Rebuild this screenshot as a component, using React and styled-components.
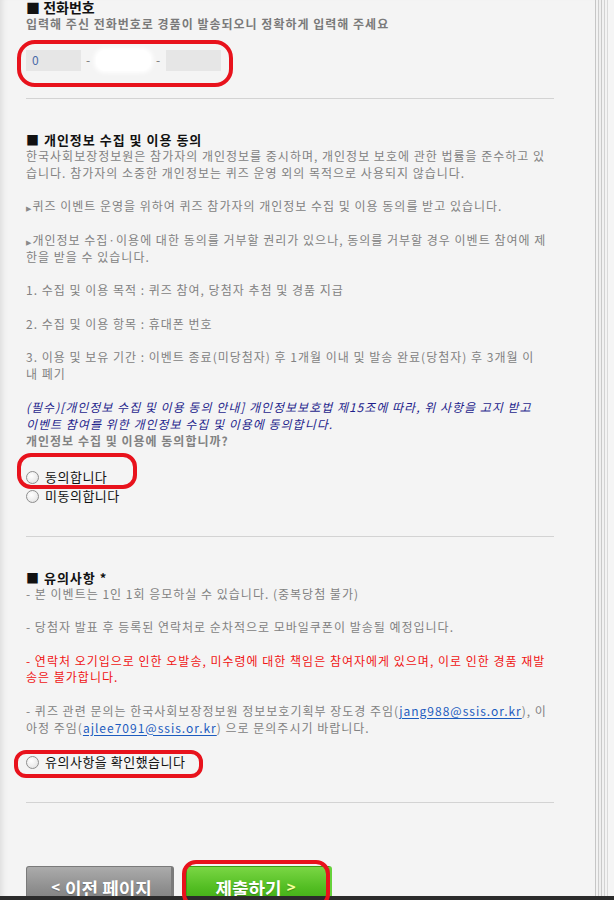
import styled, { createGlobalStyle } from "styled-components";

const GlobalStyle = createGlobalStyle`
  html, body {
    margin: 0;
    padding: 0;
    background: #f4f4f4;
  }
  body {
    font-family: "Noto Sans CJK KR", "Noto Sans", sans-serif;
  }
`;

const Frame = styled.div`
  position: relative;
  width: 614px;
  height: 900px;
  overflow: hidden;
  display: flex;
  flex-direction: column;
  background: #f4f4f4;
`;

const Viewport = styled.div`
  flex: 1;
  min-height: 0;
  display: flex;
  overflow: hidden;
`;

const Main = styled.div`
  width: 595px;
  padding-left: 26px;
  box-sizing: border-box;
  box-shadow: inset 7px 0 6px -5px rgba(0, 0, 0, 0.1);
`;

const Column = styled.div`
  width: 528px;
`;

const RightEdge = styled.div`
  width: 19px;
  background: linear-gradient(
    90deg,
    #c6c6c6 0 1px,
    #f2f2f2 1px 3px,
    #cdcdcd 3px 4px,
    #efefef 4px 6px,
    #c9c9c9 6px 7px,
    #f1f1f1 7px 9px,
    #d2d2d2 9px 10px,
    #f3f3f3 10px 12px,
    #d9d9d9 12px 13px,
    #f5f5f5 13px 19px
  );
`;

const BottomBar = styled.div`
  height: 4px;
  background: #2b2b2b;
`;

const Section = styled.section`
  padding-top: ${(p) => (p.$first ? "0" : "32px")};
  font-size: 12px;
  line-height: 16.75px;
  letter-spacing: 1px;
  color: #828282;
`;

const Title = styled.h2`
  margin: 0;
  font-size: ${(p) => (p.$large ? "14px" : "13px")};
  line-height: ${(p) => (p.$large ? "15px" : "17px")};
  letter-spacing: ${(p) => (p.$large ? "0" : "1px")};
  font-weight: 700;
  color: #111;
`;

const Sub = styled.p`
  margin: 0;
  font-size: 12px;
  line-height: 17px;
  font-weight: 700;
  color: #7a7a7a;
`;

const Para = styled.p`
  margin: ${(p) => (p.$tight ? "0" : "16.75px")} 0 0;
  color: ${(p) => (p.$tone === "red" ? "#f01414" : p.$tone === "navy" ? "#1f1f8c" : "#828282")};
  font-style: ${(p) => (p.$tone === "navy" ? "italic" : "normal")};
  font-weight: ${(p) => (p.$bold ? 700 : 400)};
  white-space: nowrap;
`;

const Arrow = styled.span`
  font-family: "DejaVu Sans", sans-serif;
  font-size: 7px;
  line-height: 0;
  letter-spacing: 0;
  color: #8a8a8a;
  margin-right: 1px;
`;

const Mail = styled.a`
  color: #1d5cbf;
  text-decoration: underline;
  text-underline-offset: 2px;
`;

const PhoneRow = styled.div`
  margin-top: 18px;
  display: flex;
  align-items: center;
`;

const PhoneBox = styled.div`
  width: 55px;
  height: 21px;
  box-sizing: border-box;
  padding-left: 6px;
  display: flex;
  align-items: center;
  font-size: 12px;
  color: #4a6aa8;
  background: ${(p) => (p.$masked ? "#ffffff" : "#e6e6e6")};
  border-radius: ${(p) => (p.$masked ? "9px" : "0")};
  box-shadow: ${(p) => (p.$masked ? "0 0 4px 2px #fff" : "none")};
`;

const Dash = styled.span`
  width: 15px;
  text-align: center;
  font-size: 12px;
  color: #777;
`;

const Divider = styled.hr`
  margin: ${(p) => p.$gap}px 0 0;
  border: 0;
  height: 1px;
  width: 528px;
  background: #d3d3d3;
`;

const RadioGroup = styled.div`
  margin-top: ${(p) => p.$gap}px;
  display: flex;
  flex-direction: column;
`;

const RadioRow = styled.label`
  height: 19px;
  display: flex;
  align-items: center;
  gap: 6px;
  font-size: 13px;
  letter-spacing: 0.5px;
  color: #111;
`;

const Dot = styled.span`
  width: 13px;
  height: 13px;
  box-sizing: border-box;
  border-radius: 50%;
  border: 1px solid #8e8e8e;
  background: radial-gradient(circle at 40% 35%, #ffffff 0%, #ececec 60%, #d8d8d8 100%);
`;

const Buttons = styled.div`
  margin-top: 63px;
  display: flex;
  gap: 12px;
`;

const Button = styled.button`
  height: 40px;
  padding: 0;
  box-sizing: border-box;
  border-radius: 3px 3px 0 0;
  font-family: "Noto Sans CJK KR", sans-serif;
  font-size: 18px;
  font-weight: 700;
  color: #fff;
  display: flex;
  justify-content: center;
  align-items: flex-start;
  padding-top: 8px;
  width: ${(p) => (p.$primary ? "146px" : "148px")};
  border: 1px solid ${(p) => (p.$primary ? "#3c9e14" : "#7a7a7a")};
  border-right: 3px solid ${(p) => (p.$primary ? "#66d23c" : "#7a7a7a")};
  background: ${(p) =>
    p.$primary
      ? "linear-gradient(#7ad644, #52bd22 55%, #3ca812)"
      : "linear-gradient(#ababab, #8f8f8f 55%, #7c7c7c)"};
  text-shadow: 0 1px 1px rgba(0, 0, 0, 0.25);
`;

const Chevron = styled.span`
  font-size: 15px;
  color: ${(p) => (p.$accent ? "#f4ff9a" : "#fff")};
  margin: 1px 5px 0;
`;

const Mark = styled.div`
  position: absolute;
  top: ${(p) => p.$top}px;
  left: ${(p) => p.$left}px;
  width: ${(p) => p.$w}px;
  height: ${(p) => p.$h}px;
  box-sizing: border-box;
  border: 4px solid #e8121c;
  border-radius: ${(p) => p.$r || 16}px;
  pointer-events: none;
`;

export default function App() {
  return (
    <>
      <GlobalStyle />
      <Frame>
        <Viewport>
          <Main>
            <Column>
              <Section $first>
                <Title $large>■ 전화번호</Title>
                <Sub>입력해 주신 전화번호로 경품이 발송되오니 정확하게 입력해 주세요</Sub>
                <PhoneRow>
                  <PhoneBox>0</PhoneBox>
                  <Dash>-</Dash>
                  <PhoneBox $masked />
                  <Dash>-</Dash>
                  <PhoneBox />
                </PhoneRow>
              </Section>
              <Divider $gap={27} />

              <Section>
                <Title>■ 개인정보 수집 및 이용 동의</Title>
                <Para $tight>
                  한국사회보장정보원은 참가자의 개인정보를 중시하며, 개인정보 보호에 관한 법률을 준수하고 있
                  <br />
                  습니다. 참가자의 소중한 개인정보는 퀴즈 운영 외의 목적으로 사용되지 않습니다.
                </Para>
                <Para>
                  <Arrow>▶</Arrow>퀴즈 이벤트 운영을 위하여 퀴즈 참가자의 개인정보 수집 및 이용 동의를 받고 있습니다.
                </Para>
                <Para>
                  <Arrow>▶</Arrow>개인정보 수집·이용에 대한 동의를 거부할 권리가 있으나, 동의를 거부할 경우 이벤트 참여에 제
                  <br />
                  한을 받을 수 있습니다.
                </Para>
                <Para>1. 수집 및 이용 목적 : 퀴즈 참여, 당첨자 추첨 및 경품 지급</Para>
                <Para>2. 수집 및 이용 항목 : 휴대폰 번호</Para>
                <Para>
                  3. 이용 및 보유 기간 : 이벤트 종료(미당첨자) 후 1개월 이내 및 발송 완료(당첨자) 후 3개월 이
                  <br />내 폐기
                </Para>
                <Para $tone="navy">
                  (필수)[개인정보 수집 및 이용 동의 안내] 개인정보보호법 제15조에 따라, 위 사항을 고지 받고
                  <br />
                  이벤트 참여를 위한 개인정보 수집 및 이용에 동의합니다.
                </Para>
                <Para $tight $bold>
                  개인정보 수집 및 이용에 동의합니까?
                </Para>
                <RadioGroup $gap={18}>
                  <RadioRow>
                    <Dot />
                    동의합니다
                  </RadioRow>
                  <RadioRow>
                    <Dot />
                    미동의합니다
                  </RadioRow>
                </RadioGroup>
              </Section>
              <Divider $gap={30} />

              <Section>
                <Title>■ 유의사항 *</Title>
                <Para $tight>- 본 이벤트는 1인 1회 응모하실 수 있습니다. (중복당첨 불가)</Para>
                <Para>- 당첨자 발표 후 등록된 연락처로 순차적으로 모바일쿠폰이 발송될 예정입니다.</Para>
                <Para $tone="red">
                  - 연락처 오기입으로 인한 오발송, 미수령에 대한 책임은 참여자에게 있으며, 이로 인한 경품 재발
                  <br />
                  송은 불가합니다.
                </Para>
                <Para>
                  - 퀴즈 관련 문의는 한국사회보장정보원 정보보호기획부 장도경 주임(<Mail>jang988@ssis.or.kr</Mail>), 이
                  <br />
                  아정 주임(<Mail>ajlee7091@ssis.or.kr</Mail>) 으로 문의주시기 바랍니다.
                </Para>
                <RadioGroup $gap={17}>
                  <RadioRow>
                    <Dot />
                    유의사항을 확인했습니다
                  </RadioRow>
                </RadioGroup>
              </Section>
              <Divider $gap={30} />

              <Buttons>
                <Button>
                  <Chevron>&lt;</Chevron>이전 페이지
                </Button>
                <Button $primary>
                  제출하기<Chevron $accent>&gt;</Chevron>
                </Button>
              </Buttons>
            </Column>
          </Main>
          <RightEdge />
        </Viewport>
        <BottomBar />

        <Mark $top={40} $left={17} $w={216} $h={47} $r={18} />
        <Mark $top={453} $left={17} $w={120} $h={36} $r={14} />
        <Mark $top={750} $left={14} $w={189} $h={28} $r={12} />
        <Mark $top={860} $left={182} $w={148} $h={48} $r={14} />
      </Frame>
    </>
  );
}
